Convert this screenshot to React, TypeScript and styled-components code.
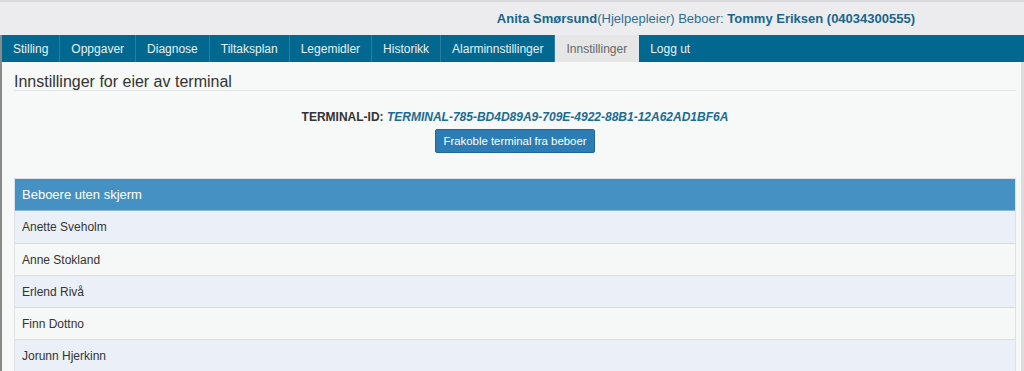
import React from "react";
import styled, { createGlobalStyle } from "styled-components";

const Global = createGlobalStyle`
  html, body { margin: 0; padding: 0; background: #f7f8f8; }
  body { font-family: "Liberation Sans", Arial, sans-serif; overflow: hidden; }
`;

const Page = styled.div`
  width: 1024px;
  height: 371px;
  overflow: hidden;
  background: #f7f8f8;
`;

const Header = styled.div`
  height: 33px;
  background: #ececee;
  border-top: 2px solid #dadadc;
  display: flex;
  align-items: center;
  justify-content: flex-end;
  padding-right: 109px;
  font-size: 13px;
  color: #2d6e95;
`;

const Strong = styled.b`
  color: #17668f;
  font-weight: bold;
`;

const Body = styled.div`
  border-left: 2px solid #8a8a8a;
  height: 336px;
`;

const Nav = styled.nav`
  display: flex;
  height: 27px;
  background: #03688f;
`;

const NavItem = styled.div<{ $active?: boolean }>`
  display: flex;
  align-items: center;
  padding: 0 11px;
  font-size: 12px;
  color: ${(p) => (p.$active ? "#666" : "#e8f1f5")};
  background: ${(p) => (p.$active ? "#e6e6e6" : "transparent")};
  border-right: 1px solid ${(p) => (p.$active ? "#e6e6e6" : "#2a7fa0")};
  &:last-child { border-right: none; }
`;

const Content = styled.div`
  padding: 11px 5px 0 12px;
  border-right: 3px solid #dcdcdc;
  height: 308px;
`;

const Title = styled.h1`
  margin: 0;
  font-weight: normal;
  font-size: 16px;
  line-height: 17px;
  color: #333;
  padding-bottom: 0;
  border-bottom: 1px solid #e3e4e4;
`;

const TerminalRow = styled.div`
  display: flex;
  flex-direction: column;
  align-items: center;
  margin-top: 19px;
  gap: 5px;
`;

const TerminalLine = styled.div`
  font-size: 12px;
  font-weight: bold;
  color: #333;
`;

const TerminalId = styled.i`
  color: #1d6b94;
  font-weight: bold;
`;

const Button = styled.button`
  font-family: inherit;
  font-size: 11.4px;
  color: #fff;
  background: #2c7db5;
  border: 1px solid #1f6796;
  border-radius: 2px;
  height: 24px;
  padding: 0 7px;
`;

const Table = styled.div`
  margin-top: 25px;
  border: 1px solid #dde2e8;
`;

const THead = styled.div`
  height: 31px;
  background: #4591c4;
  color: #fff;
  font-size: 13px;
  display: flex;
  align-items: center;
  padding-left: 7px;
  border-bottom: 1px solid #8fb8d6;
`;

const Row = styled.div<{ $alt?: boolean }>`
  height: 31px;
  background: ${(p) => (p.$alt ? "#f6f7f7" : "#ebf0f8")};
  border-bottom: 1px solid #dcdcdc;
  display: flex;
  align-items: center;
  padding-left: 7px;
  font-size: 12px;
  color: #333;
  &:nth-child(2) { height: 32px; }
`;

const tabs = [
  "Stilling",
  "Oppgaver",
  "Diagnose",
  "Tiltaksplan",
  "Legemidler",
  "Historikk",
  "Alarminnstillinger",
  "Innstillinger",
  "Logg ut",
];

const residents = [
  "Anette Sveholm",
  "Anne Stokland",
  "Erlend Rivå",
  "Finn Dottno",
  "Jorunn Hjerkinn",
];

export default function App() {
  return (
    <Page>
      <Global />
      <Header>
        <span>
          <Strong>Anita Smørsund</Strong>(Hjelpepleier) Beboer:{" "}
          <Strong>Tommy Eriksen (04034300555)</Strong>
        </span>
      </Header>
      <Body>
        <Nav>
          {tabs.map((t) => (
            <NavItem key={t} $active={t === "Innstillinger"}>
              {t}
            </NavItem>
          ))}
        </Nav>
        <Content>
          <Title>Innstillinger for eier av terminal</Title>
          <TerminalRow>
            <TerminalLine>
              TERMINAL-ID:{" "}
              <TerminalId>TERMINAL-785-BD4D89A9-709E-4922-88B1-12A62AD1BF6A</TerminalId>
            </TerminalLine>
            <Button>Frakoble terminal fra beboer</Button>
          </TerminalRow>
          <Table>
            <THead>Beboere uten skjerm</THead>
            {residents.map((r, i) => (
              <Row key={r} $alt={i % 2 === 1}>
                {r}
              </Row>
            ))}
          </Table>
        </Content>
      </Body>
    </Page>
  );
}
